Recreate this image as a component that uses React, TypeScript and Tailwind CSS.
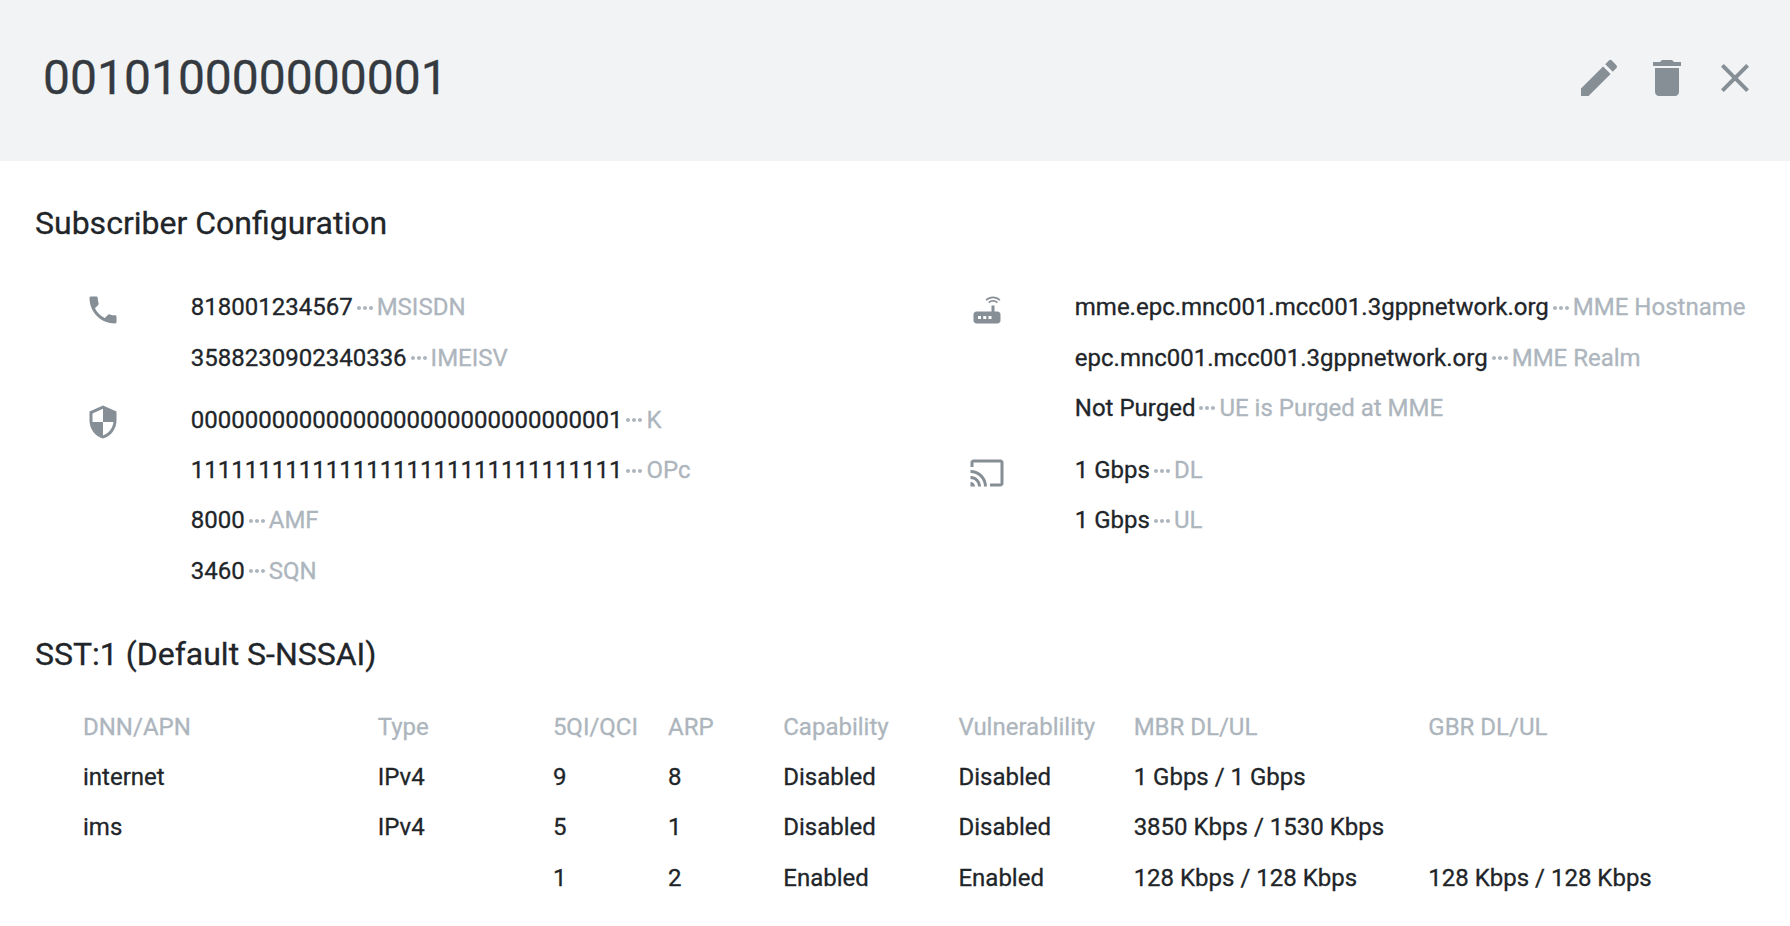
import type { ReactNode } from "react";
import {
  MdCast,
  MdClose,
  MdDelete,
  MdModeEdit,
  MdMoreHoriz,
  MdPhone,
  MdRouter,
  MdSecurity,
} from "react-icons/md";

type Entry = { value: string; label: string };

const phone: Entry[] = [
  { value: "818001234567", label: "MSISDN" },
  { value: "3588230902340336", label: "IMEISV" },
];

const security: Entry[] = [
  { value: "00000000000000000000000000000001", label: "K" },
  { value: "11111111111111111111111111111111", label: "OPc" },
  { value: "8000", label: "AMF" },
  { value: "3460", label: "SQN" },
];

const mme: Entry[] = [
  { value: "mme.epc.mnc001.mcc001.3gppnetwork.org", label: "MME Hostname" },
  { value: "epc.mnc001.mcc001.3gppnetwork.org", label: "MME Realm" },
  { value: "Not Purged", label: "UE is Purged at MME" },
];

const ambr: Entry[] = [
  { value: "1 Gbps", label: "DL" },
  { value: "1 Gbps", label: "UL" },
];

const columns = [
  "DNN/APN",
  "Type",
  "5QI/QCI",
  "ARP",
  "Capability",
  "Vulnerablility",
  "MBR DL/UL",
  "GBR DL/UL",
];

const sessions = [
  ["internet", "IPv4", "9", "8", "Disabled", "Disabled", "1 Gbps / 1 Gbps", ""],
  ["ims", "IPv4", "5", "1", "Disabled", "Disabled", "3850 Kbps / 1530 Kbps", ""],
  ["", "", "1", "2", "Enabled", "Enabled", "128 Kbps / 128 Kbps", "128 Kbps / 128 Kbps"],
];

function Group({ icon, entries }: { icon: ReactNode; entries: Entry[] }) {
  return (
    <div className="flex">
      <div className="w-[105.8px] shrink-0 pt-[9.6px] text-[36px] text-[#868e96]">{icon}</div>
      <div>
        {entries.map((entry) => (
          <div
            key={entry.label}
            className="flex h-[50.3px] items-center whitespace-nowrap leading-[36px]"
          >
            <span>{entry.value}</span>
            <MdMoreHoriz className="mt-px shrink-0 text-[24px] text-[#adb5bd]" />
            <span className="text-[#adb5bd]">{entry.label}</span>
          </div>
        ))}
      </div>
    </div>
  );
}

function SessionRow({ cells, muted }: { cells: string[]; muted?: boolean }) {
  return (
    <div
      className={
        "grid h-[50.4px] grid-cols-[294.7px_175.2px_115.2px_115.2px_175.2px_175.2px_294.7px_294.7px] items-center whitespace-nowrap leading-[36px] " +
        (muted ? "text-[#adb5bd]" : "")
      }
    >
      {cells.map((cell, i) => (
        <div key={i}>{cell}</div>
      ))}
    </div>
  );
}

export default function App() {
  return (
    <div className="h-[926px] w-[1790px] overflow-hidden bg-white font-[Roboto,sans-serif] text-[24px] text-[#212529] [-webkit-text-stroke:0.3px]">
      <header className="flex h-[161px] justify-between bg-[#f1f3f5] pr-[31px] pl-[43px]">
        <h1 className="pt-[42px] text-[48px] leading-[72px] text-[#343a40]">001010000000001</h1>
        <div className="flex gap-5 pt-[54px] text-[48px] text-[#868e96]">
          <MdModeEdit />
          <MdDelete />
          <MdClose />
        </div>
      </header>
      <main>
        <h2 className="pt-[38px] pl-[35px] text-[32px] leading-[48px]">Subscriber Configuration</h2>
        <div className="flex h-[349.4px] pt-[35.1px]">
          <section className="flex w-[969px] shrink-0 flex-col gap-3 pl-[85px]">
            <Group icon={<MdPhone />} entries={phone} />
            <Group icon={<MdSecurity />} entries={security} />
          </section>
          <section className="flex flex-col gap-3">
            <Group icon={<MdRouter />} entries={mme} />
            <Group icon={<MdCast />} entries={ambr} />
          </section>
        </div>
        <h2 className="pt-[34px] pl-[35px] text-[32px] leading-[48px]">SST:1 (Default S-NSSAI)</h2>
        <div className="pt-[23px] pl-[83px]">
          <SessionRow cells={columns} muted />
          {sessions.map((cells, i) => (
            <SessionRow key={i} cells={cells} />
          ))}
        </div>
      </main>
    </div>
  );
}
